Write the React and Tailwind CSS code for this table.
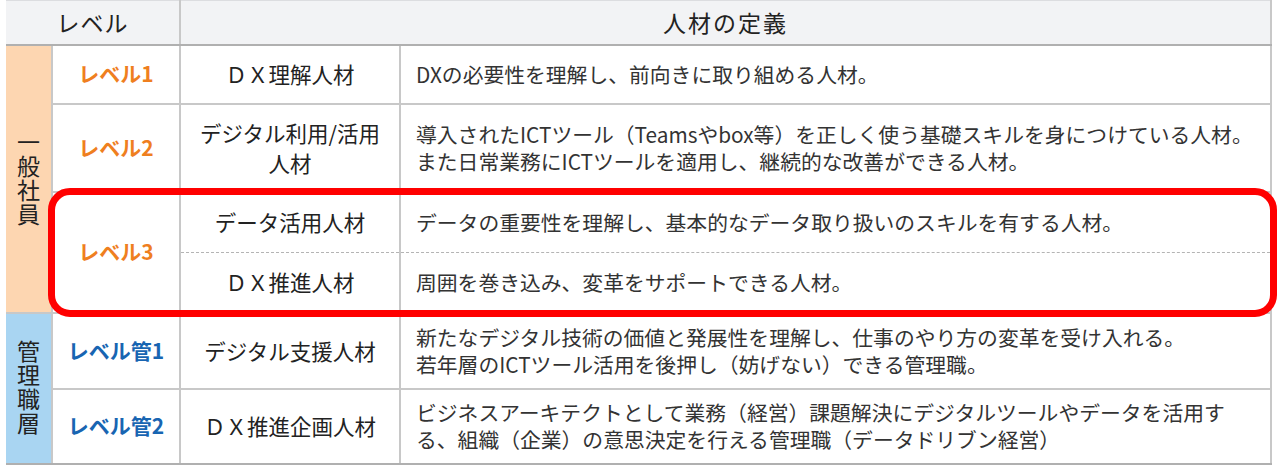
import React from "react";

const jp = { fontFamily: '"Noto Sans CJK JP", "Noto Sans", sans-serif' };

const VerticalLabel = ({ text }) => (
  <div className="flex justify-center">
    <span className="[writing-mode:vertical-rl] text-[23px] leading-[26px] tracking-[1px] text-[#222]">
      {text}
    </span>
  </div>
);

const Def = ({ lines }) => (
  <div className="pl-[15px] text-[20.8px] leading-[27px] text-[#333]">
    {lines.map((l, i) => (
      <div key={i}>{l}</div>
    ))}
  </div>
);

const Name = ({ lines }) => (
  <div className="text-center text-[21.5px] leading-[30px] text-[#222]">
    {lines.map((l, i) => (
      <div key={i}>{l}</div>
    ))}
  </div>
);

export default function App() {
  const cell = "border-[2px] border-[#c8c8c8] p-0 align-middle";
  const lvOrange = `${cell} text-center font-bold text-[21px] text-[#ef7f1f]`;
  const lvBlue = `${cell} text-center font-bold text-[21px] text-[#1865b2]`;
  const dashedCell =
    "border-[2px] border-[#c8c8c8] border-t border-t-[#b4b4b4] border-dashed p-0 align-middle [border-left-style:solid] [border-right-style:solid] [border-bottom-style:solid]";

  return (
    <div className="w-full h-[473px] bg-white overflow-hidden" style={jp}>
      <div className="relative ml-[6px] w-[1266px]">
        <table className="w-full table-fixed border-collapse">
          <colgroup>
            <col className="w-[46px]" />
            <col className="w-[128px]" />
            <col className="w-[220px]" />
            <col />
          </colgroup>
          <thead>
            <tr className="h-[44px] bg-[#f2f3f5]">
              <th
                colSpan={2}
                className="border-t border-t-[#dcdde0] border-b-[2px] border-b-[#b0b0b0] border-r-[2px] border-r-[#c8c8c8] text-center font-normal text-[23px] tracking-[1px] text-[#222]"
              >
                レベル
              </th>
              <th
                colSpan={2}
                className="border-t border-t-[#dcdde0] border-b-[2px] border-b-[#b0b0b0] border-r-[2px] border-r-[#c8c8c8] text-center font-normal text-[23px] tracking-[2px] text-[#222]"
              >
                人材の定義
              </th>
            </tr>
          </thead>
          <tbody>
            <tr className="h-[59px]">
              <td rowSpan={4} className="bg-[#fdd6b1] border-[#c8c8c8] border-r-[2px] border-b-[2px] p-0 align-middle">
                <VerticalLabel text="一般社員" />
              </td>
              <td className={lvOrange}>レベル1</td>
              <td className={cell}>
                <Name lines={["ＤＸ理解人材"]} />
              </td>
              <td className={cell}>
                <Def lines={["DXの必要性を理解し、前向きに取り組める人材。"]} />
              </td>
            </tr>
            <tr className="h-[88px]">
              <td className={lvOrange}>レベル2</td>
              <td className={cell}>
                <Name lines={["デジタル利用/活用", "人材"]} />
              </td>
              <td className={cell}>
                <Def
                  lines={[
                    "導入されたICTツール（Teamsやbox等）を正しく使う基礎スキルを身につけている人材。",
                    "また日常業務にICTツールを適用し、継続的な改善ができる人材。",
                  ]}
                />
              </td>
            </tr>
            <tr className="h-[61px]">
              <td rowSpan={2} className={lvOrange}>
                レベル3
              </td>
              <td className="border-[2px] border-[#c8c8c8] border-b-0 p-0 align-middle">
                <Name lines={["データ活用人材"]} />
              </td>
              <td className="border-[2px] border-[#c8c8c8] border-b-0 p-0 align-middle">
                <Def lines={["データの重要性を理解し、基本的なデータ取り扱いのスキルを有する人材。"]} />
              </td>
            </tr>
            <tr className="h-[60px]">
              <td className={dashedCell}>
                <Name lines={["ＤＸ推進人材"]} />
              </td>
              <td className={dashedCell}>
                <Def lines={["周囲を巻き込み、変革をサポートできる人材。"]} />
              </td>
            </tr>
            <tr className="h-[76px]">
              <td rowSpan={2} className="bg-[#a9d5f2] border-[#c8c8c8] border-r-[2px] border-t-[2px] border-b-[2px] border-b-[#b0b0b0] p-0 align-middle">
                <VerticalLabel text="管理職層" />
              </td>
              <td className={lvBlue}>レベル管1</td>
              <td className={cell}>
                <Name lines={["デジタル支援人材"]} />
              </td>
              <td className={cell}>
                <Def
                  lines={[
                    "新たなデジタル技術の価値と発展性を理解し、仕事のやり方の変革を受け入れる。",
                    "若年層のICTツール活用を後押し（妨げない）できる管理職。",
                  ]}
                />
              </td>
            </tr>
            <tr className="h-[75px]">
              <td className={`${lvBlue} border-b-[#b0b0b0]`}>レベル管2</td>
              <td className={`${cell} border-b-[#b0b0b0]`}>
                <Name lines={["ＤＸ推進企画人材"]} />
              </td>
              <td className={`${cell} border-b-[#b0b0b0]`}>
                <Def
                  lines={[
                    "ビジネスアーキテクトとして業務（経営）課題解決にデジタルツールやデータを活用す",
                    "る、組織（企業）の意思決定を行える管理職（データドリブン経営）",
                  ]}
                />
              </td>
            </tr>
          </tbody>
        </table>
        <div className="pointer-events-none absolute left-[42px] top-[188px] w-[1229px] h-[129px] rounded-[22px] border-[7px] border-[#ff0000]" />
      </div>
    </div>
  );
}
